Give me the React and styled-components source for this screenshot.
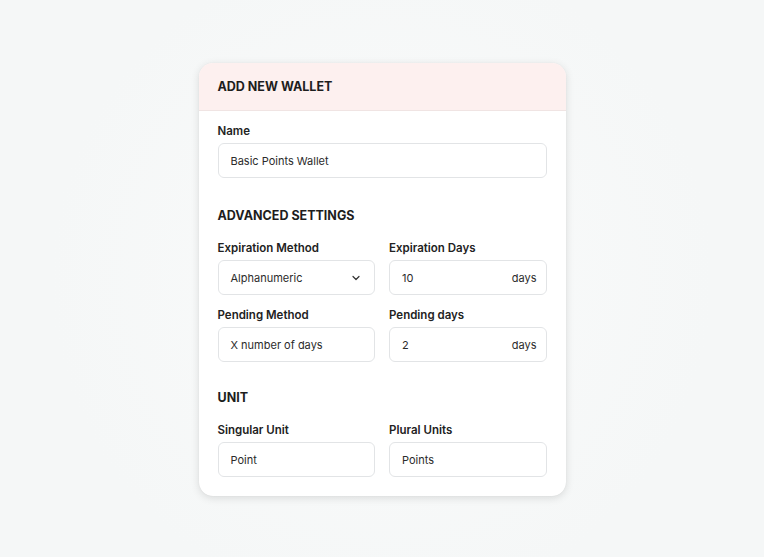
import styled, { createGlobalStyle } from "styled-components";

const GlobalStyle = createGlobalStyle`
  html, body {
    margin: 0;
    background: #f6f7f8;
  }
  body {
    font-family: "Inter", "Noto Sans", sans-serif;
    color: #1f1f1f;
  }
`;

export default function App() {
  return (
    <>
      <GlobalStyle />
      <Page>
        <Card>
          <Header>ADD NEW WALLET</Header>
          <Body>
            <Field>
              <Label>Name</Label>
              <Input>Basic Points Wallet</Input>
            </Field>

            <SectionTitle>ADVANCED SETTINGS</SectionTitle>
            <Grid>
              <Field>
                <Label>Expiration Method</Label>
                <Input>
                  <span>Alphanumeric</span>
                  <svg width="12" height="12" viewBox="0 0 24 24" fill="none" stroke="#333" strokeWidth="2.4" strokeLinecap="round" strokeLinejoin="round">
                    <path d="M6 9l6 6 6-6" />
                  </svg>
                </Input>
              </Field>
              <Field>
                <Label>Expiration Days</Label>
                <Input>
                  <span>10</span>
                  <Suffix>days</Suffix>
                </Input>
              </Field>
              <Field>
                <Label>Pending Method</Label>
                <Input>X number of days</Input>
              </Field>
              <Field>
                <Label>Pending days</Label>
                <Input>
                  <span>2</span>
                  <Suffix>days</Suffix>
                </Input>
              </Field>
            </Grid>

            <SectionTitle $top={28}>UNIT</SectionTitle>
            <Grid>
              <Field>
                <Label>Singular Unit</Label>
                <Input>Point</Input>
              </Field>
              <Field>
                <Label>Plural Units</Label>
                <Input>Points</Input>
              </Field>
            </Grid>
          </Body>
        </Card>
      </Page>
    </>
  );
}

const Page = styled.div`
  height: 557px;
  display: flex;
  justify-content: center;
  align-items: flex-start;
  padding-top: 63px;
  box-sizing: border-box;
  background: radial-gradient(circle at 50% 50%, #fafbfb 0%, #f5f7f7 70%);
`;

const Card = styled.div`
  width: 367px;
  background: #fff;
  border-radius: 14px;
  box-shadow: 0 2px 8px rgba(0, 0, 0, 0.12), 0 0 1px rgba(0, 0, 0, 0.1);
  overflow: hidden;
`;

const Header = styled.div`
  height: 48px;
  display: flex;
  align-items: center;
  padding: 0 19px;
  background: #fdf0ef;
  border-bottom: 1px solid #f0e4e3;
  font-size: 12.5px;
  font-weight: 700;
  color: #1d1d1d;
  box-sizing: border-box;
`;

const Body = styled.div`
  padding: 14px 19px 19px;
`;

const SectionTitle = styled.div`
  margin-top: ${(p) => p.$top || 30}px;
  margin-bottom: 19px;
  font-size: 12.5px;
  font-weight: 700;
  color: #1d1d1d;
`;

const Grid = styled.div`
  display: grid;
  grid-template-columns: 1fr 1fr;
  column-gap: 14px;
  row-gap: 14px;
`;

const Field = styled.div`
  display: flex;
  flex-direction: column;
`;

const Label = styled.div`
  font-size: 11.5px;
  font-weight: 600;
  color: #222;
  margin-bottom: 5px;
  line-height: 13px;
`;

const Input = styled.div`
  height: 35px;
  box-sizing: border-box;
  border: 1px solid #e2e4e6;
  border-radius: 6px;
  padding: 0 12px;
  display: flex;
  align-items: center;
  justify-content: space-between;
  font-size: 11px;
  color: #2b2b2b;
  background: #fff;
`;

const Suffix = styled.span`
  color: #2b2b2b;
  margin-right: -3px;
`;
